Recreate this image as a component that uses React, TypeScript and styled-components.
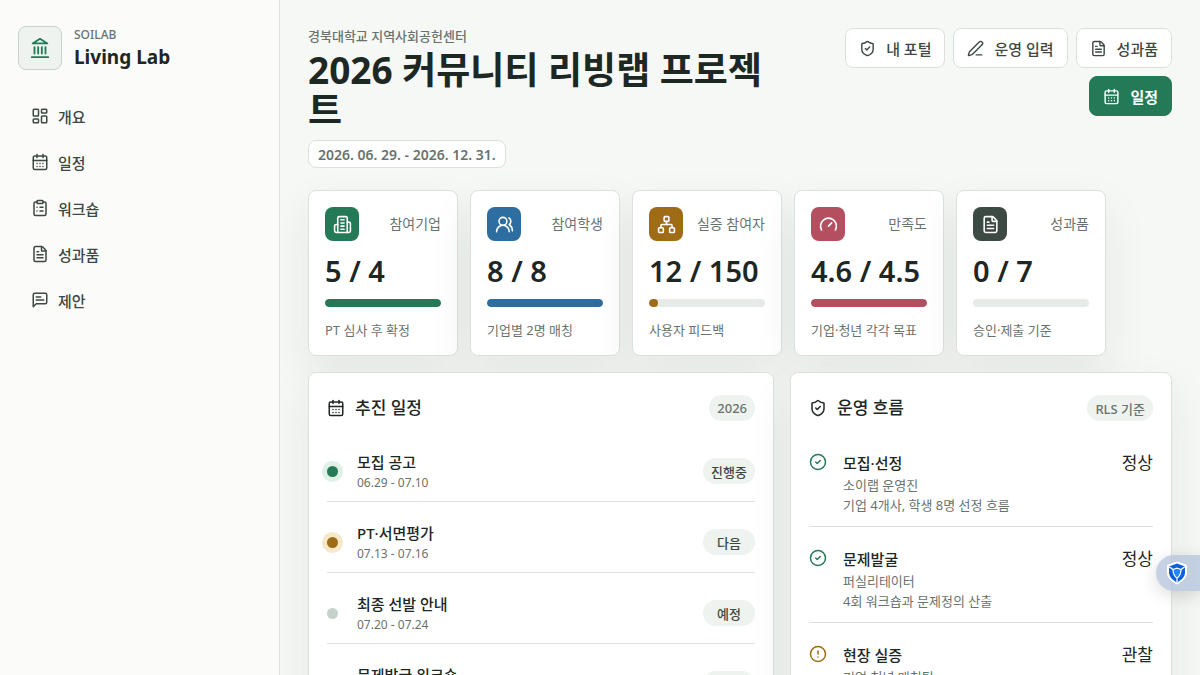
import React from "react";
import styled, { createGlobalStyle } from "styled-components";
import {
  CalendarDays,
  CircleAlert,
  CircleCheck,
  ClipboardList,
  FileText,
  Gauge,
  LayoutDashboard,
  Network,
  PenLine,
  ShieldCheck,
  UsersRound,
} from "lucide-react";

const color = {
  ink: "#1d2723",
  text: "#3d4843",
  muted: "#68736e",
  line: "#dbe2dd",
  soft: "#eef3ef",
  green: "#247a57",
  blue: "#2d6d9f",
  amber: "#a06b16",
  rose: "#b44f60",
  dark: "#3d4943",
};

const GlobalStyle = createGlobalStyle`
  *, *::before, *::after { box-sizing: border-box; }
  body {
    margin: 0;
    background: #f6f8f5;
    color: ${color.ink};
    font-family: "Noto Sans", "Noto Sans CJK KR", sans-serif;
    font-size: 16px;
  }
  h1, h2, h3, p, ul, ol { margin: 0; padding: 0; }
  ul, ol { list-style: none; }
  button { font-family: inherit; cursor: pointer; }
  svg { flex: none; }
`;

/* ---------- icons drawn here ---------- */

type IconProps = { size?: number };

const Stroke = ({ size = 18, children }: IconProps & { children: React.ReactNode }) => (
  <svg
    width={size}
    height={size}
    viewBox="0 0 24 24"
    fill="none"
    stroke="currentColor"
    strokeWidth="2"
    strokeLinecap="round"
    strokeLinejoin="round"
    aria-hidden="true"
  >
    {children}
  </svg>
);

const Landmark = ({ size }: IconProps) => (
  <Stroke size={size}>
    <path d="M3 22h18M6 18v-7M10 18v-7M14 18v-7M18 18v-7" />
    <path d="m12 2 8 5H4z" />
  </Stroke>
);

const Building = ({ size }: IconProps) => (
  <Stroke size={size}>
    <path d="M6 22V4a2 2 0 0 1 2-2h8a2 2 0 0 1 2 2v18Z" />
    <path d="M6 12H4a2 2 0 0 0-2 2v6a2 2 0 0 0 2 2h2" />
    <path d="M18 9h2a2 2 0 0 1 2 2v9a2 2 0 0 1-2 2h-2" />
    <path d="M10 6h4M10 10h4M10 14h4M10 18h4" />
  </Stroke>
);

const Message = ({ size }: IconProps) => (
  <Stroke size={size}>
    <path d="M21 15a2 2 0 0 1-2 2H7l-4 4V5a2 2 0 0 1 2-2h14a2 2 0 0 1 2 2z" />
    <path d="M13 8H7M17 12H7" />
  </Stroke>
);

/* ---------- layout ---------- */

const Shell = styled.div`
  display: grid;
  grid-template-columns: 280px minmax(0, 1fr);
  min-height: 100vh;
`;

const Sidebar = styled.aside`
  position: sticky;
  top: 0;
  height: 100vh;
  padding: 26px 18px;
  background: #fbfcfa;
  border-right: 1px solid ${color.line};
`;

const Brand = styled.div`
  display: flex;
  align-items: center;
  gap: 12px;
  margin-bottom: 26px;
`;

const BrandMark = styled.span`
  display: grid;
  place-items: center;
  width: 44px;
  height: 44px;
  border: 1px solid #c7d4cc;
  border-radius: 8px;
  background: ${color.soft};
  color: ${color.green};
`;

const BrandSub = styled.p`
  color: ${color.muted};
  font-size: 12px;
  font-weight: 500;
  line-height: 18px;
`;

const BrandName = styled.p`
  font-size: 19px;
  font-weight: 700;
  line-height: 26px;
`;

const Nav = styled.nav`
  display: grid;
  gap: 6px;
`;

const NavLink = styled.a`
  display: flex;
  align-items: center;
  gap: 9px;
  height: 40px;
  padding: 0 13px;
  border-radius: 8px;
  color: ${color.text};
  font-size: 15px;
  font-weight: 500;
  text-decoration: none;
`;

const Main = styled.main`
  padding: 26px 28px;
`;

const Header = styled.header`
  display: grid;
  grid-template-columns: minmax(0, 1fr) minmax(0, 390px);
  gap: 16px;
  margin-bottom: 22px;
`;

const Eyebrow = styled.p`
  color: ${color.muted};
  font-size: 13px;
  font-weight: 500;
  line-height: 20px;
`;

const Title = styled.h1`
  margin: 4px 0 10px;
  font-size: 37px;
  font-weight: 700;
  line-height: 40px;
`;

const Period = styled.p`
  display: inline-flex;
  align-items: center;
  height: 28px;
  padding: 0 9px;
  border: 1px solid ${color.line};
  border-radius: 8px;
  background: #fff;
  color: ${color.muted};
  font-size: 14px;
  font-weight: 600;
`;

const Actions = styled.div`
  display: flex;
  flex-wrap: wrap;
  align-content: flex-start;
  justify-content: flex-end;
  gap: 8px;
  padding-top: 2px;
`;

const Action = styled.button<{ $primary?: boolean }>`
  display: inline-flex;
  align-items: center;
  gap: 10px;
  height: 40px;
  padding: 0 13px;
  border: 1px solid ${(p) => (p.$primary ? color.green : color.line)};
  border-radius: 8px;
  background: ${(p) => (p.$primary ? color.green : "#fff")};
  color: ${(p) => (p.$primary ? "#fff" : color.text)};
  font-size: 15px;
  font-weight: ${(p) => (p.$primary ? 600 : 500)};
`;

const Stats = styled.section`
  display: grid;
  grid-template-columns: repeat(auto-fill, 150px);
  gap: 12px;
  margin-bottom: 16px;
`;

const Card = styled.article`
  border: 1px solid ${color.line};
  border-radius: 8px;
  background: #fff;
  box-shadow: 0 18px 45px rgba(29, 39, 35, 0.08);
`;

const StatCard = styled(Card)`
  padding: 16px;
`;

const StatTop = styled.div`
  display: flex;
  align-items: center;
  justify-content: space-between;
`;

const StatIcon = styled.span<{ $tone: string }>`
  display: grid;
  place-items: center;
  width: 34px;
  height: 34px;
  border-radius: 8px;
  background: ${(p) => p.$tone};
  color: #fff;
`;

const StatLabel = styled.h3`
  color: ${color.muted};
  font-size: 14px;
  font-weight: 400;
  line-height: 20px;
`;

const StatValue = styled.p`
  margin: 14px 0 12px;
  font-size: 29px;
  font-weight: 600;
  line-height: 32px;
  white-space: nowrap;
`;

const Track = styled.div`
  height: 8px;
  overflow: hidden;
  border-radius: 4px;
  background: #e6ebe7;
`;

const Fill = styled.div<{ $tone: string }>`
  height: 100%;
  border-radius: 4px;
  background: ${(p) => p.$tone};
`;

const StatNote = styled.p`
  margin-top: 14px;
  color: ${color.muted};
  font-size: 13px;
  line-height: 18px;
`;

const Panels = styled.section`
  display: grid;
  grid-template-columns: minmax(0, 122fr) minmax(0, 100fr);
  gap: 16px;
`;

const Panel = styled(Card)`
  padding: 18px;
`;

const PanelHead = styled.div`
  display: flex;
  align-items: center;
  justify-content: space-between;
  height: 34px;
  margin-bottom: 16px;
`;

const PanelTitle = styled.h2`
  display: flex;
  align-items: center;
  gap: 10px;
  font-size: 17px;
  font-weight: 500;
  line-height: 24px;
`;

const Pill = styled.span<{ $muted?: boolean }>`
  display: inline-flex;
  align-items: center;
  justify-content: center;
  height: 26px;
  padding: 0 8px;
  border-radius: 13px;
  background: ${color.soft};
  color: ${(p) => (p.$muted ? color.muted : color.text)};
  font-size: 13px;
  font-weight: 500;
`;

const StepPill = styled(Pill)`
  min-width: 52px;
`;

const List = styled.ol`
  display: grid;
  gap: 10px;
`;

const Step = styled.li`
  display: grid;
  grid-template-columns: 18px minmax(0, 1fr) auto;
  column-gap: 12px;
  align-items: center;
  padding: 9px 0;
  border-bottom: 1px solid ${color.line};
`;

const Dot = styled.span<{ $tone: string; $halo: string }>`
  width: 11px;
  height: 11px;
  border-radius: 50%;
  background: ${(p) => p.$tone};
  box-shadow: 0 0 0 5px ${(p) => p.$halo};
`;

const ItemTitle = styled.h3`
  font-size: 15px;
  font-weight: 500;
  line-height: 24px;
`;

const ItemNote = styled.p`
  color: ${color.muted};
  font-size: 12px;
  line-height: 18px;
`;

const Flow = styled.li`
  display: grid;
  grid-template-columns: 22px minmax(0, 1fr) auto;
  column-gap: 12px;
  padding: 10px 0 11px;
  border-bottom: 1px solid ${color.line};
`;

const FlowIcon = styled.span<{ $tone: string }>`
  display: flex;
  padding-top: 2px;
  color: ${(p) => p.$tone};
`;

const FlowNote = styled(ItemNote)`
  font-size: 13px;
  line-height: 20px;
`;

const FlowState = styled.span`
  font-size: 17px;
  line-height: 24px;
`;

const FloatingTab = styled.button`
  position: fixed;
  right: 0;
  top: 555px;
  display: flex;
  align-items: center;
  width: 44px;
  height: 36px;
  padding: 0 0 0 10px;
  border: 0;
  border-radius: 18px 0 0 18px;
  background: rgba(176, 193, 218, 0.72);
  box-shadow: 0 4px 16px rgba(29, 39, 35, 0.16);
`;

const ShieldLogo = () => (
  <svg width="22" height="24" viewBox="0 0 22 24" aria-hidden="true">
    <path
      d="M11 1 20.500 4.300V11c0 5.500-3.700 9.200-9.500 12C5.200 20.200 1.500 16.500 1.500 11V4.300Z"
      fill="#fff"
      stroke="#fff"
      strokeLinejoin="round"
    />
    <path d="M11 2.600 19 5.400V11c0 4.600-3 7.800-8 10.400C6 18.800 3 15.600 3 11V5.400Z" fill="#0b5fdc" />
    <path
      d="M3.200 5.700 7 8.500 11 7.200l4 1.300 3.800-2.800M7 8.500c0 4 1.300 6.500 4 8.500 2.700-2 4-4.500 4-8.500M11 17v4.200"
      fill="none"
      stroke="#fff"
      strokeWidth="1.300"
    />
    <path d="M11 8.200 14 9.200c-.1 2.900-1.100 4.900-3 6.500-1.900-1.600-2.900-3.600-3-6.500Z" fill="#1f8bff" />
  </svg>
);

/* ---------- data ---------- */

const navItems = [
  { label: "개요", icon: <LayoutDashboard size={18} /> },
  { label: "일정", icon: <CalendarDays size={18} /> },
  { label: "워크숍", icon: <ClipboardList size={18} /> },
  { label: "성과품", icon: <FileText size={18} /> },
  { label: "제안", icon: <Message size={18} /> },
];

const actions = [
  { label: "내 포털", icon: <ShieldCheck size={17} /> },
  { label: "운영 입력", icon: <PenLine size={17} /> },
  { label: "성과품", icon: <FileText size={17} /> },
  { label: "일정", icon: <CalendarDays size={17} />, primary: true },
];

const stats = [
  { label: "참여기업", value: "5 / 4", note: "PT 심사 후 확정", tone: color.green, pct: 100, icon: <Building size={19} /> },
  { label: "참여학생", value: "8 / 8", note: "기업별 2명 매칭", tone: color.blue, pct: 100, icon: <UsersRound size={19} /> },
  { label: "실증 참여자", value: "12 / 150", note: "사용자 피드백", tone: color.amber, pct: 8, icon: <Network size={19} /> },
  { label: "만족도", value: "4.6 / 4.5", note: "기업·청년 각각 목표", tone: color.rose, pct: 100, icon: <Gauge size={19} /> },
  { label: "성과품", value: "0 / 7", note: "승인·제출 기준", tone: color.dark, pct: 0, icon: <FileText size={19} /> },
];

const steps = [
  { title: "모집 공고", date: "06.29 - 07.10", state: "진행중", tone: color.green, halo: "#dff0e7" },
  { title: "PT·서면평가", date: "07.13 - 07.16", state: "다음", tone: color.amber, halo: "#f5e8cb" },
  { title: "최종 선발 안내", date: "07.20 - 07.24", state: "예정", tone: "#c6d1c9", halo: "transparent" },
  { title: "문제발굴 워크숍", date: "07.27 - 08.14", state: "예정", tone: "#c6d1c9", halo: "transparent" },
];

const flows = [
  { title: "모집·선정", owner: "소이랩 운영진", note: "기업 4개사, 학생 8명 선정 흐름", state: "정상", ok: true },
  { title: "문제발굴", owner: "퍼실리테이터", note: "4회 워크숍과 문제정의 산출", state: "정상", ok: true },
  { title: "현장 실증", owner: "기업·청년 매칭팀", note: "사용자 150명 피드백 수집", state: "관찰", ok: false },
];

export default function App() {
  return (
    <>
      <GlobalStyle />
      <Shell>
        <Sidebar>
          <Brand>
            <BrandMark>
              <Landmark size={22} />
            </BrandMark>
            <div>
              <BrandSub>SOILAB</BrandSub>
              <BrandName>Living Lab</BrandName>
            </div>
          </Brand>
          <Nav>
            {navItems.map((n) => (
              <NavLink href="#" key={n.label}>
                {n.icon}
                {n.label}
              </NavLink>
            ))}
          </Nav>
        </Sidebar>

        <Main>
          <Header>
            <div>
              <Eyebrow>경북대학교 지역사회공헌센터</Eyebrow>
              <Title>2026 커뮤니티 리빙랩 프로젝트</Title>
              <Period>2026. 06. 29. - 2026. 12. 31.</Period>
            </div>
            <Actions>
              {actions.map((a) => (
                <Action type="button" key={a.label} $primary={a.primary}>
                  {a.icon}
                  {a.label}
                </Action>
              ))}
            </Actions>
          </Header>

          <Stats>
            {stats.map((s) => (
              <StatCard key={s.label}>
                <StatTop>
                  <StatIcon $tone={s.tone}>{s.icon}</StatIcon>
                  <StatLabel>{s.label}</StatLabel>
                </StatTop>
                <StatValue>{s.value}</StatValue>
                <Track>
                  <Fill $tone={s.tone} style={{ width: `${s.pct}%` }} />
                </Track>
                <StatNote>{s.note}</StatNote>
              </StatCard>
            ))}
          </Stats>

          <Panels>
            <Panel>
              <PanelHead>
                <PanelTitle>
                  <CalendarDays size={18} />
                  추진 일정
                </PanelTitle>
                <Pill $muted>2026</Pill>
              </PanelHead>
              <List>
                {steps.map((s) => (
                  <Step key={s.title}>
                    <Dot $tone={s.tone} $halo={s.halo} />
                    <div>
                      <ItemTitle>{s.title}</ItemTitle>
                      <ItemNote>{s.date}</ItemNote>
                    </div>
                    <StepPill>{s.state}</StepPill>
                  </Step>
                ))}
              </List>
            </Panel>

            <Panel>
              <PanelHead>
                <PanelTitle>
                  <ShieldCheck size={18} />
                  운영 흐름
                </PanelTitle>
                <Pill $muted>RLS 기준</Pill>
              </PanelHead>
              <List>
                {flows.map((f) => (
                  <Flow key={f.title}>
                    <FlowIcon $tone={f.ok ? color.green : color.amber}>
                      {f.ok ? <CircleCheck size={18} /> : <CircleAlert size={18} />}
                    </FlowIcon>
                    <div>
                      <ItemTitle>{f.title}</ItemTitle>
                      <FlowNote>{f.owner}</FlowNote>
                      <FlowNote>{f.note}</FlowNote>
                    </div>
                    <FlowState>{f.state}</FlowState>
                  </Flow>
                ))}
              </List>
            </Panel>
          </Panels>
        </Main>
      </Shell>
      <FloatingTab type="button" aria-label="보안">
        <ShieldLogo />
      </FloatingTab>
    </>
  );
}
